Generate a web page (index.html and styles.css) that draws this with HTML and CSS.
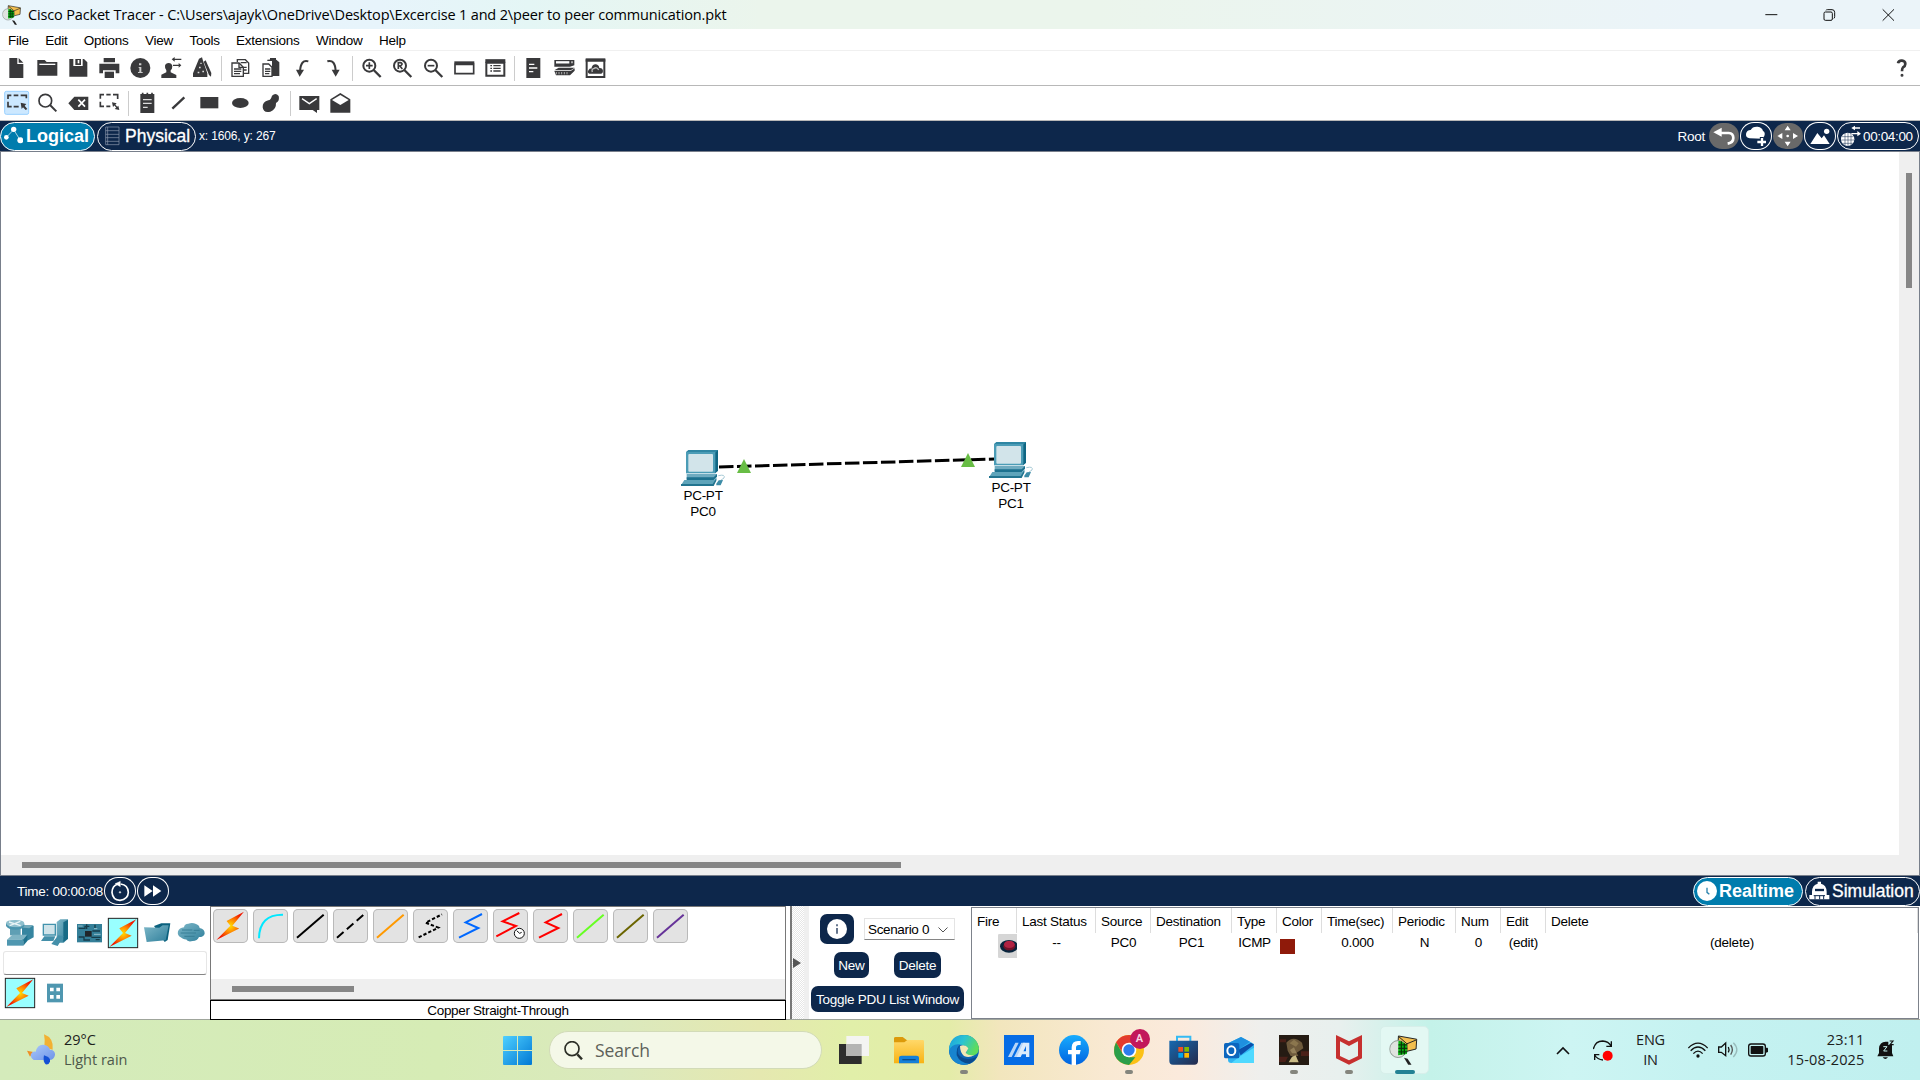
FILE: index.html
```html
<!DOCTYPE html>
<html lang="en">
<head>
<meta charset="utf-8">
<title>Cisco Packet Tracer</title>
<link rel="stylesheet" href="styles.css">
</head>
<body>
<svg class="defs" width="0" height="0" aria-hidden="true">
  <defs>
    <radialGradient id="spark"><stop offset="0" stop-color="#ffe000"/><stop offset=".45" stop-color="#ff8a00"/><stop offset="1" stop-color="#f01800"/></radialGradient>
    <linearGradient id="steel" x1="0" y1="0" x2="1" y2="1"><stop offset="0" stop-color="#7db7c8"/><stop offset="1" stop-color="#2f7f9b"/></linearGradient>
    <linearGradient id="win" x1="0" y1="0" x2="1" y2="1"><stop offset="0" stop-color="#4fd0ff"/><stop offset="1" stop-color="#0078d4"/></linearGradient>
    <linearGradient id="folder" x1="0" y1="0" x2="0" y2="1"><stop offset="0" stop-color="#ffd869"/><stop offset="1" stop-color="#f8b313"/></linearGradient>
    <linearGradient id="edge" x1="0" y1="0" x2="1" y2=".4"><stop offset="0" stop-color="#1a9fe0"/><stop offset=".5" stop-color="#2bc3d2"/><stop offset="1" stop-color="#5fdc5c"/></linearGradient>
    <linearGradient id="fb" x1="0" y1="0" x2="0" y2="1"><stop offset="0" stop-color="#18acfe"/><stop offset="1" stop-color="#0163e0"/></linearGradient>
    <linearGradient id="store" x1="0" y1="0" x2="1" y2="1"><stop offset="0" stop-color="#1669b0"/><stop offset="1" stop-color="#242b4c"/></linearGradient>
    <linearGradient id="cloudy" x1="0" y1="0" x2="1" y2="1"><stop offset="0" stop-color="#aac8fa"/><stop offset="1" stop-color="#6f94e8"/></linearGradient>
    <symbol id="bolt" viewBox="0 0 88 88"><path d="M84 3 33 30 44 44 3 86 70 52 50 44Z" fill="url(#spark)"/></symbol>
    <symbol id="pc" viewBox="0 0 132 108">
      <path d="M15 6 22 0H111V62L102 70Z" fill="#2f86a3"/><path d="M102 8 111 1V62L102 70Z" fill="#0f6683"/>
      <rect x="15" y="6" width="88" height="64" fill="#4b9cb6"/><rect x="22" y="12" width="74" height="53" rx="3" fill="#d2e4ea"/>
      <path d="M17 72H108V79L98 88H17Z" fill="#6fabc0"/><path d="M17 82H98L108 72V80L98 90H17Z" fill="#1d718e"/>
      <path d="M10 90H98L106 82V90L96 106H0Z" fill="#5ea4ba"/><path d="M0 102H95L106 85V92L98 108H0Z" fill="#22748f"/>
      <path d="M112 77Q134 72 129 84L119 91" fill="none" stroke="#a7cad6" stroke-width="3"/><path d="M106 101 113 91 126 90 119 106H106Z" fill="#3d8ca7"/>
    </symbol>
    <symbol id="tracer" viewBox="0 0 90 92">
      <path d="M28 3 84 13 82 43 54 50 26 36Z" fill="#f2bf4e" stroke="#222" stroke-width="3"/>
      <path d="M29 5 54 27 83 15M54 27V48" fill="none" stroke="#222" stroke-width="3"/>
      <circle cx="27" cy="43" r="26" fill="#dfe3df" stroke="#8c9690" stroke-width="3"/>
      <path d="M28 18 38 20 54 30V58L27 62Z" fill="#09b312"/><path d="M28 30H54M28 41H55M28 52H55M37 19V60M46 25V59" stroke="#063a08" stroke-width="4"/>
      <path d="M45 70 56 73 68 91H58Z" fill="#222"/>
    </symbol>
  </defs>
</svg>

<div class="window">
  <header class="titlebar">
    <svg class="app-icon" width="20" height="20" viewBox="0 0 90 92"><use href="#tracer"/></svg>
    <span class="title">Cisco Packet Tracer - C:\Users\ajayk\OneDrive\Desktop\Excercise 1 and 2\peer to peer communication.pkt</span>
    <svg class="winctl" width="174" height="28" viewBox="398 0 522 84" fill="none" stroke="#111" stroke-width="3"><path d="M435 41H471"/><rect x="611" y="33" width="25" height="25" rx="4"/><path d="M617 28Q617 26 622 26H635Q643 26 643 34V47Q643 52 640 52"/><path d="M787 25 821 59M821 25 787 59"/></svg>
  </header>

  <nav class="menubar">
    <span>File</span><span>Edit</span><span>Options</span><span>View</span><span>Tools</span><span>Extensions</span><span>Window</span><span>Help</span>
  </nav>

  <div class="toolbar main-tools">
    <svg class="tool" viewBox="5 153 93 102"><path d="M30 174H54V192H72V234H30ZM58 174 72 188H58Z"/></svg>
    <svg class="tool" viewBox="98 153 93 102"><path d="M114 180H136L142 186H174V227H114Z"/><path d="M120 193H168" stroke="#fff" stroke-width="4"/></svg>
    <svg class="tool" viewBox="191 153 93 102"><path d="M210 177H254L264 187V230H210Z"/><path d="M222 177H250V198H222Z" fill="#fff"/><path d="M228 177H245V195H228Z"/><path d="M235 180H240V190H235Z" fill="#fff"/></svg>
    <svg class="tool" viewBox="284 153 93 102"><path d="M313 174H347V187H313ZM300 191H360V220H349V211H311V220H300Z"/><path d="M316 215H344V234H316Z"/></svg>
    <svg class="tool" viewBox="377 153 93 102"><circle cx="423" cy="204" r="30"/><path d="M419 190H426V196H419ZM418 201H426V216H430V219H416V216H420V204H418Z" fill="#ccc"/></svg>
    <svg class="tool" viewBox="470 153 93 102"><path d="M486 234V224L501 217V211Q496 206 497 197 499 189 508 189T519 198Q519 207 514 211V217L531 225V234Z"/><path d="M524 178H546M521 196H542" stroke="#39393b" stroke-width="4"/><path d="M517 178 526 171V185ZM546 196 538 189V203Z"/></svg>
    <svg class="tool" viewBox="562 153 93 102"><path d="M598 176 607 172 610 182 623 220V231H580V220Z"/><path d="M612 185 618 181 635 219 634 230 628 225Z"/><path d="M598 200h5v5h-5zM608 212h5v5h-5zM594 215h5v5h-5zM602 188h4v4h-4z" fill="#ddd"/></svg>
    <i class="sep"></i>
    <svg class="tool line" viewBox="677 153 93 102"><path d="M714 186V179H738L748 189V220H734"/><path d="M698 189H719L732 202V229H698Z" fill="#fff"/><path d="M719 189V202H732M704 207H726M704 214H726M704 221H722M724 188H742M732 202H742M734 210H742"/></svg>
    <svg class="tool line" viewBox="770 153 93 102"><path d="M804 181H830L838 188V226H820V180Z" fill="#39393b"/><path d="M812 177H830" stroke-width="6"/><path d="M791 192H808L818 202V229H791Z" fill="#fff"/><path d="M797 207H813M797 214H813M797 221H810"/></svg>
    <svg class="tool line" viewBox="863 153 93 102"><path d="M927 184Q904 177 902 215" stroke-width="6"/><path d="M890 209H914L901 230Z" fill="#39393b" stroke="none"/></svg>
    <svg class="tool line" viewBox="956 153 93 102"><path d="M984 184Q1008 177 1009 215" stroke-width="6"/><path d="M997 209H1021L1009 230Z" fill="#39393b" stroke="none"/></svg>
    <i class="sep"></i>
    <svg class="tool line" viewBox="1068 153 93 102"><circle cx="1108" cy="197" r="18" stroke-width="6"/><path d="M1121 210 1142 231" stroke-width="7"/><path d="M1098 197H1118M1108 187V207" stroke-width="5"/></svg>
    <svg class="tool line" viewBox="52 153 93 102"><circle cx="91" cy="197" r="18" stroke-width="6"/><path d="M104 210 125 231" stroke-width="7"/><path d="M86 207V188H92Q98 189 97 193T86 198H91L98 207" stroke-width="5"/></svg>
    <svg class="tool line" viewBox="145 153 93 102"><circle cx="184" cy="197" r="18" stroke-width="6"/><path d="M197 210 218 231" stroke-width="7"/><path d="M174 197H194" stroke-width="5"/></svg>
    <svg class="tool line" viewBox="239 153 93 102"><path d="M257 193H313V221H257Z" stroke-width="5"/><path d="M255 188H315" stroke-width="8"/></svg>
    <svg class="tool line" viewBox="332 153 93 102"><path d="M351 188H405V227H351Z" stroke-width="6"/><path d="M348 183H408" stroke-width="11"/><path d="M363 197H368M372 197H394M363 205H368M372 205H394M363 213H368M372 213H394" stroke-width="4"/></svg>
    <i class="sep"></i>
    <svg class="tool" viewBox="446 153 93 102"><path d="M471 174H513V234H471Z"/><path d="M479 193H495M479 204H504M479 215H492" stroke="#fff" stroke-width="4"/></svg>
    <svg class="tool" viewBox="539 153 93 102"><path d="M555 180H615V196L602 200H555Z"/><path d="M560 187H600" stroke="#fff" stroke-width="7"/><path d="M605 184H611V190H605Z" fill="#aaa"/><path d="M568 203H616L604 211H555ZM555 213H604L616 205V212L602 226H560Z"/><path d="M561 216V223M569 216V223M577 216V223M585 216V223M593 216V223" stroke="#aaa" stroke-width="3"/></svg>
    <svg class="tool line" viewBox="632 153 93 102"><path d="M652 181H705V231H652Z" stroke-width="6"/><path d="M649 180H708" stroke-width="10"/><path d="M660 221Q652 217 658 210 661 205 666 206 669 192 680 193 689 195 690 204 700 203 701 213 701 219 696 221Z" fill="#39393b" stroke="none"/><path d="M669 216Q666 207 673 206 682 199 688 210" stroke="#bbb"/></svg>
    <svg class="help" width="12" height="20" viewBox="829 174 36 60" fill="none" stroke="#39393b" stroke-width="8"><path d="M835 190Q837 181 847 182 857 183 857 192 857 198 850 202 847 205 847 214"/><circle cx="847" cy="226" r="2" stroke-width="5"/></svg>
  </div>

  <div class="toolbar draw-tools">
    <svg class="tool" viewBox="5 258 93 102"><rect x="16" y="274" width="72" height="69" rx="5" fill="#cce8ff" stroke="#99d1ff" stroke-width="3"/><path d="M26 297V286H36M43 286H57M64 286H81V295M26 305V320H37M43 320H58" fill="none" stroke="#39393b" stroke-width="5"/><path d="M64 308 81 312 76 317 84 327 79 330 71 322 67 327Z"/></svg>
    <svg class="tool line" viewBox="98 258 93 102"><circle cx="138" cy="302" r="19" stroke-width="5"/><path d="M152 315 171 334" stroke-width="6"/></svg>
    <svg class="tool" viewBox="191 258 93 102"><path d="M207 310 225 290H267V330H225Z"/><path d="M237 299 257 320M257 299 237 320" stroke="#fff" stroke-width="5"/></svg>
    <svg class="tool" viewBox="284 258 93 102"><path d="M303 296V284H314M321 284H334M341 284H355V297M303 305V319H314M321 319H333" fill="none" stroke="#39393b" stroke-width="5"/><path d="M338 307 352 310 341 321ZM360 330 346 327 357 317Z"/><path d="M345 313 354 324" stroke="#39393b" stroke-width="4"/></svg>
    <i class="sep"></i>
    <svg class="tool" viewBox="398 258 93 102"><path d="M423 282H465V339H423Z"/><path d="M430 278V290M444 278V290M458 278V290" stroke="#39393b" stroke-width="5"/><path d="M431 299H457M431 310H457M431 322H445" stroke="#ddd" stroke-width="4"/></svg>
    <svg class="tool line" viewBox="491 258 93 102"><path d="M519 326 555 292" stroke-width="7"/></svg>
    <svg class="tool" viewBox="584 258 93 102"><path d="M603 291H657V325H603Z"/></svg>
    <svg class="tool" viewBox="677 258 93 102"><ellipse cx="723" cy="309" rx="25" ry="15"/></svg>
    <svg class="tool" viewBox="770 258 93 102"><path d="M818 287Q829 277 838 288 842 303 830 309 831 329 813 335 792 340 790 322 789 306 807 301 815 299 818 287Z"/></svg>
    <i class="sep"></i>
    <svg class="tool" viewBox="884 258 93 102"><path d="M900 288H960V330H953V339L940 330H900Z"/><path d="M908 296 930 311 952 296" fill="none" stroke="#fff" stroke-width="4"/></svg>
    <svg class="tool" viewBox="977 258 93 102"><path d="M993 298 1023 279 1053 298V338H993Z"/><path d="M998 300 1023 285 1048 300 1023 315Z" fill="#fff"/></svg>
  </div>

  <div class="navbar">
    <div class="pill active logical"><svg width="19" height="20" viewBox="13 374 57 60" fill="#fff"><path d="M20 408 42 385 62 417" fill="none" stroke="#fff" stroke-width="2"/><circle cx="20" cy="408" r="7"/><circle cx="42" cy="384" r="8"/><circle cx="62" cy="417" r="9"/></svg><b>Logical</b></div>
    <div class="pill physical"><svg width="15" height="20" viewBox="311 377 45 58" fill="none" stroke="#8f9caf" stroke-width="2"><path d="M313 379H353V432H313ZM313 390H353M313 401H353M313 411H353M313 422H353M319 379V432"/></svg><span class="big">Physical</span></div>
    <span class="coords">x: 1606, y: 267</span>
    <div class="nav-right">
      <span class="root">Root</span>
      <svg class="round grey" viewBox="267 369 90 78"><path d="M280 397 305 383V410Z" fill="#fff"/><path d="M300 399H326Q340 400 340 414T323 431" fill="none" stroke="#fff" stroke-width="8"/></svg>
      <svg class="round outlined" viewBox="360 366 96 84"><path d="M389 415Q377 413 378 402 380 390 392 390 397 379 413 380 427 382 429 393 437 397 433 408L427 416Z" fill="#fff"/><path d="M425 411V440M411 426H440" stroke="#0d274b" stroke-width="11"/><path d="M426 414V438M412 426H438" stroke="#fff" stroke-width="7"/></svg>
      <svg class="round grey" viewBox="460 369 90 78" fill="#fff"><path d="M504 377 513 391H495ZM504 439 495 425H513ZM473 408 488 399V417ZM535 408 520 399V417Z"/><circle cx="504" cy="408" r="4"/></svg>
      <svg class="round outlined" viewBox="552 366 96 84" fill="#fff"><path d="M571 432 592 399 605 415 612 406 629 432Z"/><circle cx="620" cy="394" r="8"/></svg>
      <div class="pill clock"><svg width="21" height="22" viewBox="663 376 63 64" fill="#fff"><circle cx="683" cy="418" r="20"/><path d="M666 410H700M664 420H702M668 430H698M675 399V437M684 398V438M693 400V436" stroke="#0d274b" stroke-width="1.5"/><path d="M702 384H720M694 401H716" stroke="#fff" stroke-width="4"/><path d="M694 384 705 377V391ZM723 401 712 393V409Z"/></svg><span>00:04:00</span></div>
    </div>
  </div>

  <main class="workspace">
    <div class="canvas">
      <svg class="link" width="340" height="40" viewBox="0 0 340 40"><path d="M18 26 294 18" fill="none" stroke="#000" stroke-width="3" stroke-dasharray="14.5 3.5"/></svg>
      <div class="device pc0"><svg width="44" height="36"><use href="#pc"/></svg><span>PC-PT</span><span>PC0</span></div>
      <div class="device pc1"><svg width="44" height="36"><use href="#pc"/></svg><span>PC-PT</span><span>PC1</span></div>
      <i class="up up0"></i><i class="up up1"></i>
    </div>
    <div class="vscroll"><i></i></div>
    <div class="hscroll"><i></i></div>
  </main>

  <div class="timebar">
    <span class="time">Time: 00:00:08</span>
    <svg class="round outlined" viewBox="312 51 96 84" fill="none" stroke="#fff"><path d="M352 73Q337 78 336 97 338 120 360 121 384 119 385 97 384 75 362 72" stroke-width="5"/><path d="M345 71 361 64V80Z" fill="#fff"/><circle cx="360" cy="97" r="2" stroke-width="3"/></svg>
    <svg class="round outlined" viewBox="411 51 96 84" fill="#fff"><path d="M433 76 458 93 433 110ZM459 76 484 93 459 110Z"/></svg>
    <div class="modes">
      <div class="pill active realtime"><svg width="20" height="20" viewBox="0 0 60 60"><circle cx="30" cy="30" r="30" fill="#fff"/><path d="M30 20V34L37 40" fill="none" stroke="#2a83ad" stroke-width="4"/></svg><b>Realtime</b></div>
      <div class="pill simulation"><svg width="21" height="20" viewBox="806 63 63 58" fill="#fff"><path d="M807 117V104H815V94Q816 73 832 70V64H842V70Q858 73 859 94V104H867V117Z"/><path d="M824 89H851" stroke="#0d274b" stroke-width="7"/><path d="M820 106H854M824 106V117M838 106V117M850 106V117" stroke="#0d274b" stroke-width="3"/></svg><span class="big">Simulation</span></div>
    </div>
  </div>

  <section class="dock">
    <div class="devices">
      <svg class="kinds" width="210" height="45" viewBox="0 138 630 135">
        <path d="M66 196 101 198V232L82 242H66Z" fill="#3685a0"/><path d="M57 202 68 195H101L88 205Z" fill="#73abbc"/><path d="M30 198H62V226H30Z" fill="#5f9fb4"/>
        <path d="M18 190Q18 180 46 180T73 191 46 202 18 190Z" fill="#8ebfcd"/><path d="M18 190V198Q24 209 46 209T73 198V191Q68 202 46 202T18 190Z" fill="#4b95ae"/><path d="M27 186 62 197M29 197 61 184" stroke="#eaf4f6" stroke-width="4"/>
        <path d="M21 239 37 224H82L70 239Z" fill="#7fb4c4"/><path d="M21 239H70V257H21Z" fill="#4f97b0"/><path d="M70 239 82 224V243L70 257Z" fill="#1f728d"/>
        <path d="M170 186 181 178H204V236L191 248H170Z" fill="url(#steel)"/><path d="M190 187 204 179V236L190 246Z" fill="#176b86"/><path d="M130 193H166V225H130Z" fill="#cfe3e9" stroke="#4293ad" stroke-width="4"/><path d="M123 243 133 229H166L160 243ZM154 252 175 226 191 229 173 258Z" fill="#438fa9"/>
        <path d="M231 192H306V247H231Z" fill="#347f98"/><path d="M236 205H255V199H268M236 231H252V240H270M277 213H300M274 232H302M260 193V207M285 194V204M287 239H299" fill="none" stroke="#163d4b" stroke-width="4"/><path d="M255 213H275V230H255Z" fill="#20262a"/><path d="M234 198H248M282 223H302M282 206H292" stroke="#93bfca" stroke-width="3"/>
        <rect x="325" y="175" width="88" height="88" fill="#9ff" stroke="#222" stroke-width="3"/><use href="#bolt" x="325" y="175" width="88" height="88"/>
        <path d="M462 198 484 190H511L503 240 494 246Z" fill="#0b617e"/><path d="M432 202 478 203 488 196H506L497 241 440 246Z" fill="url(#steel)"/>
        <path d="M542 232Q531 226 534 214 538 204 552 202 553 191 565 191 577 187 588 192 598 195 599 204 615 208 614 221 611 231 597 231 592 243 578 243 563 247 558 238 550 239 542 232Z" fill="url(#steel)"/><path d="M546 210H577M542 219H588M553 229H584M581 211H599" stroke="#387f96" stroke-width="3"/>
      </svg>
      <div class="field"></div>
      <svg class="kinds" width="210" height="43" viewBox="0 345 630 129"><rect x="16" y="355" width="88" height="88" fill="#9ff" stroke="#222" stroke-width="3"/><use href="#bolt" x="16" y="355" width="88" height="88"/><path d="M141 371H189V427H141Z" fill="#4f97b0"/><path d="M150 383h11v11h-11zM169 383h11v11h-11zM150 405h11v11h-11zM169 405h11v11h-11z" fill="#fff"/></svg>
    </div>

    <div class="cables">
      <div class="cable-list">
        <div class="buttons">
          <svg class="cable" viewBox="0 0 105 102"><use href="#bolt" x="7" y="5" width="90" height="90"/></svg>
          <svg class="cable" viewBox="0 0 105 102"><path d="M18 88Q19 16 90 17" stroke="#00e8ff"/></svg>
          <svg class="cable" viewBox="0 0 105 102"><path d="M12 86 92 17" stroke="#000"/></svg>
          <svg class="cable" viewBox="0 0 105 102"><path d="M12 86 92 17" stroke="#000" stroke-dasharray="26 13"/></svg>
          <svg class="cable" viewBox="0 0 105 102"><path d="M12 86 92 17" stroke="#ff9900"/></svg>
          <svg class="cable" viewBox="0 0 105 102"><path d="M17 85 76 56 38 41 87 16" stroke="#000" stroke-dasharray="10 6"/></svg>
          <svg class="cable" viewBox="0 0 105 102"><path d="M18 86 76 57 38 40 87 15" stroke="#0068ff"/></svg>
          <svg class="cable" viewBox="0 0 105 102"><path d="M10 82 69 51 29 37 79 12" stroke="#f00"/><circle cx="79" cy="73" r="15" fill="#fff" stroke="#111" stroke-width="3"/><path d="M71 65 80 73 86 70" stroke="#111" stroke-width="3"/></svg>
          <svg class="cable" viewBox="0 0 105 102"><path d="M18 86 76 57 38 40 87 15" stroke="#f00"/></svg>
          <svg class="cable" viewBox="0 0 105 102"><path d="M12 86 92 17" stroke="#66ff22"/></svg>
          <svg class="cable" viewBox="0 0 105 102"><path d="M12 86 92 17" stroke="#6b6500"/></svg>
          <svg class="cable" viewBox="0 0 105 102"><path d="M12 86 92 17" stroke="#663399"/></svg>
        </div>
        <div class="cable-scroll"><i></i></div>
      </div>
      <div class="cable-name">Copper Straight-Through</div>
    </div>

    <div class="splitter"><i></i></div>

    <div class="scenario">
      <div class="row top">
        <button class="info"><svg width="20" height="20" viewBox="0 0 60 60"><circle cx="30" cy="30" r="30" fill="#fff"/><path d="M27 16H33V22H27ZM27 27H33V44H27Z" fill="#65758d"/></svg></button>
        <div class="select"><span>Scenario 0</span><svg width="10" height="6" viewBox="0 0 10 6"><path d="M.5.5 5 5 9.5.5" fill="none" stroke="#555"/></svg></div>
      </div>
      <div class="row mid"><button class="new">New</button><button class="del">Delete</button></div>
      <button class="toggle">Toggle PDU List Window</button>
    </div>

    <div class="pdu">
      <div class="pdu-row head"><span>Fire</span><span>Last Status</span><span>Source</span><span>Destination</span><span>Type</span><span>Color</span><span>Time(sec)</span><span>Periodic</span><span>Num</span><span>Edit</span><span>Delete</span></div>
      <div class="pdu-row body"><span class="fire"><svg width="19" height="24" viewBox="654 222 57 72"><rect x="654" y="222" width="62" height="72" rx="4" fill="#d6d6d6"/><ellipse cx="687" cy="259" rx="27" ry="19" fill="#08243c"/><ellipse cx="688" cy="259" rx="18" ry="12" fill="#701228"/><ellipse cx="688" cy="253" rx="16" ry="11" fill="#b02242"/></svg></span><span>--</span><span>PC0</span><span>PC1</span><span>ICMP</span><span class="color"><i></i></span><span>0.000</span><span>N</span><span>0</span><span>(edit)</span><span>(delete)</span></div>
    </div>
  </section>
</div>

<footer class="taskbar">
  <div class="weather">
    <svg width="28" height="32" viewBox="81 520 84 96"><path d="M132 521Q162 532 158 567L133 560Q136 538 132 521Z" fill="#f2b133"/><path d="M81 570 100 574 90 588Z" fill="#ef8f25"/><path d="M101 598Q90 592 93 580 98 571 107 573 112 551 130 552 146 553 150 567 166 568 165 583 162 598 148 598Z" fill="url(#cloudy)"/><path d="M132 584Q153 590 150 603 146 613 137 611 128 602 132 584Z" fill="#1450d4"/></svg>
    <div><p class="temp">29°C</p><p class="cond">Light rain</p></div>
  </div>
  <svg class="start" width="29" height="29" viewBox="0 0 29 29" fill="url(#win)"><path d="M0 1Q0 0 1 0H14V14H0ZM15 0H28Q29 0 29 1V14H15ZM0 15H14V29H1Q0 29 0 28ZM15 15H29V28Q29 29 28 29H15Z"/></svg>
  <div class="search"><svg width="19" height="19" viewBox="488 542 57 57" fill="none" stroke="#2b2e26"><circle cx="512" cy="565" r="21" stroke-width="5"/><path d="M528 582 542 597" stroke-width="7"/></svg><span>Search</span></div>
  <div class="apps">
    <div class="app"><svg viewBox="177 525 90 90"><path d="M177 552H245V612H177Z" fill="#2d2d2d"/><path d="M199 528H267V588H199Z" fill="#f4f4f2"/><path d="M199 552H245V588H199Z" fill="#b4b4b3"/></svg></div>
    <div class="app"><svg viewBox="342 525 90 90"><path d="M342 535Q342 531 347 531H368L380 540H400V560H342Z" fill="#dc9a0b"/><path d="M342 547H373L382 540H428Q432 540 432 544V610H342Z" fill="url(#folder)"/><path d="M357 610V594Q357 587 365 587H409Q417 587 417 594V610Z" fill="#1580d8"/><path d="M367 599H407" stroke="#0a4d8c" stroke-width="4"/></svg></div>
    <div class="app run"><svg viewBox="507 525 90 90"><circle cx="552" cy="570" r="45" fill="#0c63b4"/><path d="M507 565Q512 525 553 525 590 527 597 565 596 588 570 588 556 587 557 580 565 571 560 562 552 551 535 555 515 558 507 575Z" fill="url(#edge)"/><path d="M507 572Q515 549 541 553 524 566 535 588 553 607 588 597 570 617 546 614 510 608 507 572Z" fill="#1784cf"/><path d="M541 555Q525 574 540 589 560 604 591 590 583 605 568 611 540 610 530 586 529 562 541 555Z" fill="#0a4a8e"/><path d="M540 558Q556 552 565 565 560 575 557 579 565 588 583 585 568 595 552 588 540 577 540 558Z" fill="#f3e7b5"/></svg></div>
    <div class="app"><svg viewBox="672 525 90 90"><path d="M672 525H762V615H672Z" fill="#066ce5"/><path d="M684 591 706 548H716L695 591ZM702 591 724 548H734L712 591Z" fill="#b7d5f8"/><path d="M730 548H748V591H738V583H724L729 574H738V558L722 591H710Z" fill="#dcebfc"/></svg></div>
    <div class="app"><svg viewBox="837 525 90 90"><circle cx="882" cy="570" r="45" fill="url(#fb)"/><path d="M875 615V583H864V570H875V562Q876 543 894 543H902V555H896Q888 555 888 563V570H902L899 583H888V615Z" fill="#fff"/></svg></div>
    <div class="app run"><svg viewBox="1002 525 90 90"><circle cx="1047" cy="570" r="45" fill="#fbc116"/><path d="M1008 547Q1022 525 1047 525T1086 548H1047L1028 580Z" fill="#e33b2e"/><path d="M1008 547 1028 581 1047 592H1066L1047 615Q1015 612 1004 586 999 567 1008 547Z" fill="#2b9e49"/><circle cx="1047" cy="570" r="22" fill="#fff"/><circle cx="1047" cy="570" r="17" fill="#2d7cec"/></svg><em>A</em></div>
    <div class="app"><svg viewBox="1166 525 90 90"><path d="M1190 544V530H1230V544" fill="none" stroke="#35baf3" stroke-width="6"/><path d="M1167 542H1253V603Q1253 614 1242 614H1178Q1167 614 1167 603Z" fill="url(#store)"/><path d="M1194 561H1208V575H1194Z" fill="#f25022"/><path d="M1212 561H1226V575H1212Z" fill="#7fba00"/><path d="M1194 579H1208V593H1194Z" fill="#00a4ef"/><path d="M1212 579H1226V593H1212Z" fill="#ffb900"/></svg></div>
    <div class="app"><svg viewBox="132 525 90 90"><path d="M144 550 183 531 222 552V600Q222 609 212 609H154Q144 609 144 600Z" fill="#31b5f2"/><path d="M144 550 183 531 210 545 174 570Z" fill="#1f90df"/><path d="M174 570 213 548 222 554 182 586Z" fill="#0b4faa"/><path d="M178 590 222 563V609H154Z" fill="#50d9ff"/><rect x="132" y="549" width="46" height="46" rx="5" fill="#0c66be"/><ellipse cx="154" cy="572" rx="12" ry="13" fill="none" stroke="#fff" stroke-width="6"/></svg></div>
    <div class="app run"><svg viewBox="297 525 90 90"><path d="M297 525H387V615H297Z" fill="#251b13"/><path d="M319 548Q340 525 366 548L370 565 350 578 355 588H332L323 572Z" fill="#6e5a3c"/><path d="M329 550 342 539 356 550 348 560Z" fill="#8b764e"/><path d="M330 570 342 562 350 580H336Z" fill="#94805a"/><path d="M297 590H324L316 606H297ZM363 574H387V588H363ZM300 538H318V547H300Z" fill="#4a2018"/><path d="M336 590 347 586 356 607H326Z" fill="#c9ba85"/></svg></div>
    <div class="app run"><svg viewBox="462 525 90 90"><path d="M468 525 507 544 546 525V595L507 614 468 595ZM480 544V588L507 601 534 588V544L507 558Z" fill="#c6302f" fill-rule="evenodd"/></svg></div>
    <div class="app current"><svg viewBox="0 0 90 92"><use href="#tracer"/></svg></div>
  </div>
  <div class="tray">
    <svg class="chev" width="14" height="9" viewBox="0 0 14 9"><path d="M1 8 7 2 13 8" fill="none" stroke="#111" stroke-width="1.6"/></svg>
    <svg class="sync" width="20" height="21" viewBox="160 538 60 63" fill="none" stroke="#111" stroke-width="4"><path d="M161 565Q167 541 189 541 207 542 214 556M215 542V557H200M165 598V582H179M165 583Q173 597 190 598"/><circle cx="204" cy="585" r="15" fill="#f00" stroke="none"/></svg>
    <div class="lang"><p>ENG</p><p>IN</p></div>
    <svg class="wifi" width="20" height="16" viewBox="444 544 60 48" fill="none" stroke="#111" stroke-width="4"><path d="M445 562Q474 533 503 562M452 570Q474 548 496 570M460 579Q474 564 488 579"/><circle cx="474" cy="586" r="5" fill="#111" stroke="none"/></svg>
    <svg class="vol" width="21" height="18" viewBox="533 544 63 54" fill="none" stroke="#111" stroke-width="4"><path d="M535 562H543L556 550V588L543 578H535ZM564 562Q568 570 564 578"/><path d="M571 556Q581 570 571 585" stroke="#555"/><path d="M579 549Q600 570 579 592" stroke="#9bb"/></svg>
    <svg class="batt" width="20" height="14" viewBox="624 549 60 42"><rect x="626" y="552" width="50" height="36" rx="7" fill="none" stroke="#111" stroke-width="4"/><rect x="632" y="558" width="38" height="24" rx="2" fill="#111"/><path d="M678 563H682Q684 563 684 567V574Q684 578 678 578Z" fill="#111"/></svg>
    <div class="datetime"><p>23:11</p><p>15-08-2025</p></div>
    <svg class="bell" width="18" height="20" viewBox="1010 541 54 60"><path d="M1016 580V566Q1018 546 1036 546H1044V556H1055V580L1059 590H1011Z" fill="#111"/><path d="M1027 593H1043Q1035 603 1027 593Z" fill="#111"/><path d="M1029 561H1040L1030 574H1041" fill="none" stroke="#c6f2ef" stroke-width="3"/><path d="M1048 544H1058L1049 555H1060" fill="none" stroke="#111" stroke-width="3.5"/></svg>
  </div>
</footer>
</body>
</html>
```
FILE: styles.css
```css
* { box-sizing: border-box; }
body { margin: 0; width: 1920px; height: 1080px; overflow: hidden; display: flex; flex-direction: column; background: #fff; color: #000; font: 13.5px/16px "Liberation Sans", Arial, sans-serif; letter-spacing: -.25px; }
svg { display: block; flex: none; }
p { margin: 0; }
.defs { position: absolute; }
.window { height: 1020px; display: flex; flex-direction: column; }

.titlebar { height: 29px; display: flex; align-items: center; background: linear-gradient(90deg, #e9f5fb 0, #e7f4fb 380px, #e4f6f5 530px, #ebf5ec 760px, #ebf5ec 1100px, #ebf4f9 1700px); }
.app-icon { margin-left: 2px; }
.title { margin-left: 6px; font: 14.5px/20px "Open Sans", "Noto Sans", sans-serif; letter-spacing: -.16px; white-space: nowrap; }
.winctl { margin-left: auto; margin-right: -7px; }

.menubar { height: 22px; display: flex; gap: 16.4px; padding: 4px 8px 0; border-bottom: 1px solid #f0f0f0; }

.toolbar { height: 35px; display: flex; border-bottom: 1px solid #b8b8b8; padding-left: 1px; }
.tool { width: 31px; height: 34px; fill: #39393b; }
.tool.line { fill: none; stroke: #39393b; stroke-width: 4; }
.sep { width: 7px; height: 25px; margin-top: 5px; background: linear-gradient(#ccc, #ccc) center / 1px 100% no-repeat; }
.help { margin: 7px 12px 0 auto; }

.navbar { height: 30px; background: #0d274b; color: #fff; display: flex; align-items: center; }
.pill { height: 29px; display: flex; align-items: center; border: 1px solid #fff; border-radius: 14.5px; }
.pill b, .big { font-size: 18px; letter-spacing: 0; }
.big { font-size: 17.5px; -webkit-text-stroke: .3px #fff; }
.active { background: #007cad; }
.logical { width: 95px; padding-left: 3px; gap: 3px; }
.physical { width: 99px; margin-left: 2px; padding-left: 7px; gap: 5px; }
.coords { margin-left: 3px; font-size: 12px; letter-spacing: -.15px; }
.nav-right { margin-left: auto; display: flex; align-items: center; gap: 1px; padding-right: 1px; }
.root { margin: 1px 3px 0 0; }
.round { border-radius: 14px; }
.round.grey { width: 30px; height: 26px; background: #696969; }
.round.outlined { width: 32px; height: 28px; box-shadow: inset 0 0 0 1px #fff; }
.clock { width: 82px; height: 28px; padding-left: 3px; gap: 1px; }
.clock span { letter-spacing: -.35px; margin-top: 1px; }

.workspace { height: 725px; display: grid; grid-template: 703px 20px / 1fr 20px; border: 1px solid #787f8b; }
.canvas { position: relative; background: #fff; }
.link { position: absolute; left: 700px; top: 289px; overflow: visible; }
.device { position: absolute; display: flex; flex-direction: column; align-items: center; }
.device svg { width: 44px; height: 36px; }
.device span:nth-child(2) { margin-top: 2px; }
.pc0 { left: 680px; top: 298px; }
.pc1 { left: 988px; top: 290px; }
.up { position: absolute; border: 7px solid transparent; border-top: 0; border-bottom: 14px solid #68bd45; }
.up0 { left: 736px; top: 307px; }
.up1 { left: 960px; top: 301px; }
.vscroll, .hscroll { background: #efefef; }
.vscroll { padding: 21px 7px; }
.vscroll i { display: block; width: 6px; height: 115px; background: #868686; }
.hscroll { grid-column: span 2; padding: 7px 21px; }
.hscroll i { display: block; width: 879px; height: 6px; background: #868686; }

.timebar { height: 30px; background: #0d274b; color: #fff; display: flex; align-items: center; gap: 1px; }
.time { width: 86px; margin: 1px 0 0 17px; white-space: nowrap; }
.modes { margin-left: auto; display: flex; gap: 2px; }
.realtime { width: 110px; padding-left: 3px; gap: 2px; }
.simulation { width: 115px; padding-left: 3px; gap: 2px; }

.dock { height: 114px; display: flex; border-bottom: 1px solid #9fa59b; }
.devices { width: 210px; }
.field { width: 204px; height: 24px; margin-left: 3px; border: 1px solid #e6e6e6; border-bottom: 1px solid #858585; border-radius: 3px; }
.cables { width: 576px; }
.cable-list { height: 94px; border: 1px solid #787878; }
.buttons { height: 72px; display: flex; gap: 5px; padding: 2px 0 0 2px; }
.cable { width: 35px; height: 34px; background: #e3e3e3; border-radius: 5px; box-shadow: inset 0 0 0 1px #b9b9b9; fill: none; stroke-width: 6; }
.cable-scroll { height: 20px; background: #efefef; padding: 7px 21px; }
.cable-scroll i { display: block; width: 122px; height: 6px; background: #868686; }
.cable-name { height: 20px; border: 1px solid #000; text-align: center; line-height: 20px; letter-spacing: -.35px; }
.splitter { width: 19px; margin-left: 4px; display: flex; align-items: center; border-left: 2px solid #777; border-right: 5px solid #efefef; background: repeating-conic-gradient(#e6e6e6 0 25%, #fff 0 50%) 0 0 / 2px 2px; }
.splitter i { margin-left: 1px; border: 5px solid transparent; border-left: 8px solid #555; border-right: 0; }

.scenario { width: 162px; padding: 8px 0 0 2px; }
.scenario button { font: inherit; letter-spacing: inherit; color: #fff; background: #0d274b; border: 0; border-radius: 7px; padding: 1px 0 0; height: 26px; white-space: nowrap; }
.row { display: flex; align-items: center; }
.scenario .info { width: 34px; height: 30px; margin-left: 9px; padding: 0 0 0 7px; }
.select { width: 91px; height: 22px; margin-left: 10px; padding: 1px 6px 0 3px; display: flex; align-items: center; justify-content: space-between; border: 1px solid #e4e4e4; border-bottom-color: #858585; }
.select span { letter-spacing: -.35px; }
.mid { margin: 8px 0; }
.new { width: 35px; margin-left: 23px; }
.del { width: 47px; margin-left: 25px; }
.toggle { width: 153px; }

.pdu { width: 948px; height: 112px; margin-top: 1px; border: 1px solid #7d828b; }
.pdu-row { display: grid; grid-template-columns: 45px 79px 55px 81px 45px 45px 71px 63px 45px 45px 1fr; }
.head span { height: 25px; padding: 6px 0 0 5px; border-right: 1px solid #ddd; white-space: nowrap; }
.body { line-height: 19px; }
.body span { height: 24px; text-align: center; }
.body .fire { display: flex; justify-content: flex-end; }
.body .fire svg { margin-top: 1px; }
.color i { display: block; width: 15px; height: 15px; margin: 6px 0 0 3px; background: #8f1a0a; }

.taskbar { height: 60px; display: flex; align-items: center; color: #1c211c; font: 14.5px/20px "Open Sans", "Noto Sans", sans-serif; letter-spacing: 0; background: linear-gradient(90deg, #d4ebbb 0, #d6ecb5 440px, #dbe9bd 620px, #e5e8b0 760px, #e1efa9 850px, #e4eca9 950px, #f2e6bd 1000px, #f9e9d3 1110px, #fbeadc 1180px, #efefed 1260px, #e8f0ee 1340px, #c4f2e9 1430px, #cdf5f3 1570px, #c5f2f1 1700px, #c0f0ef); }
.weather { width: 503px; padding-left: 27px; display: flex; align-items: center; gap: 9px; }
.cond { color: #4d584b; }
.search { width: 273px; height: 38px; margin-left: 17px; padding-left: 14px; display: flex; align-items: center; gap: 12px; border-radius: 19px; background: #f4f8e8; border: 1px solid #d2dbb8; font-size: 17.5px; letter-spacing: -.1px; color: #5d6159; }
.apps { display: flex; margin-left: 4.5px; }
.app { position: relative; width: 55px; height: 60px; display: grid; place-items: center; }
.app svg { width: 30px; height: 30px; }
.run::after, .current::after { content: ""; position: absolute; left: 23.5px; bottom: 6px; width: 8px; height: 4px; border-radius: 2px; background: #84857d; }
.current::before { content: ""; position: absolute; inset: 6px 3px; border-radius: 5px; background: #e3f8f3; border: 1px solid #d7efea; }
.current svg { position: relative; }
.current::after { width: 20px; left: 18px; background: #238294; }
.app em { position: absolute; left: 28px; top: 9px; width: 20px; height: 20px; border-radius: 50%; background: #c2185b; color: #f8d5e3; font: 600 11px/20px Roboto, sans-serif; text-align: center; }
.tray { display: flex; align-items: center; flex: 1; }
.chev { margin-left: 124px; }
.sync { margin-left: 23px; }
.lang { width: 40px; margin-left: 18px; text-align: center; letter-spacing: -.2px; }
.wifi { margin-left: 17px; }
.vol { margin-left: 10px; }
.batt { margin-left: 9px; }
.datetime { width: 90px; margin-left: 7px; text-align: right; letter-spacing: .15px; }
.bell { margin-left: 12px; }
```
